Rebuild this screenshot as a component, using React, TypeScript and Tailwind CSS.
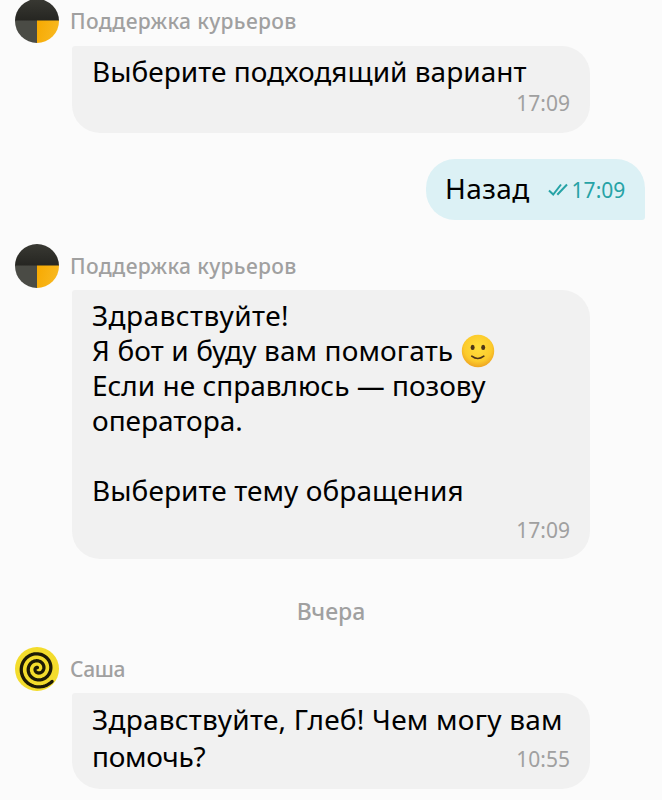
import type { ReactNode } from "react";

function CourierAvatar() {
  return (
    <svg viewBox="0 0 44 44" className="size-11 shrink-0">
      <defs>
        <clipPath id="round">
          <circle cx="22" cy="22" r="22" />
        </clipPath>
        <linearGradient id="amber" x1="0" y1="0" x2="1" y2="0.3">
          <stop offset="0" stopColor="#f7a900" />
          <stop offset="1" stopColor="#f8b820" />
        </linearGradient>
        <linearGradient id="dark" x1="0" y1="0" x2="0" y2="1">
          <stop offset="0" stopColor="#393933" />
          <stop offset="1" stopColor="#252521" />
        </linearGradient>
      </defs>
      <g clipPath="url(#round)">
        <rect width="44" height="22" fill="url(#dark)" />
        <rect y="21.5" width="22" height="23" fill="#4a4b45" />
        <rect x="22" y="21.5" width="22" height="23" fill="url(#amber)" />
      </g>
    </svg>
  );
}

function spiralPath() {
  const points: string[] = [];
  const start = 42;
  for (let a = 0; a <= 930; a += 6) {
    const r = 19.2 - (a / 360) * 7;
    const t = ((start + a) * Math.PI) / 180;
    const x = 22.8 + r * Math.cos(t);
    const y = 21.6 + r * Math.sin(t);
    points.push(`${x.toFixed(2)} ${y.toFixed(2)}`);
  }
  return "M" + points.join("L");
}

function SpiralAvatar() {
  return (
    <svg viewBox="0 0 44 44" className="size-11 shrink-0">
      <circle cx="22" cy="22" r="22" fill="#f3dc2c" />
      <path d={spiralPath()} fill="none" stroke="#1d1a06" strokeWidth="3.3" strokeLinecap="round" strokeLinejoin="round" />
    </svg>
  );
}

function Smile() {
  return (
    <svg viewBox="0 0 34 34" className="inline-block size-[34px] shrink-0">
      <defs>
        <radialGradient id="face" cx="0.5" cy="0.4" r="0.6">
          <stop offset="0" stopColor="#ffdf3c" />
          <stop offset="0.7" stopColor="#fccb2c" />
          <stop offset="1" stopColor="#eea522" />
        </radialGradient>
      </defs>
      <circle cx="17" cy="17" r="16.2" fill="url(#face)" />
      <ellipse cx="11.6" cy="13.4" rx="2" ry="2.6" fill="#4d3518" />
      <ellipse cx="22.2" cy="13.4" rx="2" ry="2.6" fill="#4d3518" />
      <path d="M10.8 22.2q6 4.6 12 0" fill="none" stroke="#4d3518" strokeWidth="1.7" strokeLinecap="round" />
    </svg>
  );
}

function Header({ avatar, name, className }: { avatar: ReactNode; name: string; className: string }) {
  return (
    <div className="flex h-11 items-center pl-[15px]">
      {avatar}
      <span className={`ml-[11px] whitespace-nowrap text-[21px] leading-7 font-medium text-[#a0a0a0] ${className}`}>{name}</span>
    </div>
  );
}

function Time({ value, className = "" }: { value: string; className?: string }) {
  return <span className={`mr-5 self-end text-[21px] leading-7 text-[#a0a0a0] ${className}`}>{value}</span>;
}

function Line({ className = "", children }: { className?: string; children?: ReactNode }) {
  return <div className={`flex h-[35px] items-center whitespace-nowrap text-[28px] leading-[35px] ${className}`}>{children}</div>;
}

function Bubble({ className, children }: { className: string; children: ReactNode }) {
  return (
    <div className={`ml-[72px] flex w-[518px] flex-col rounded-[28px] rounded-tl-[3px] bg-[#f1f1f1] pl-5 ${className}`}>
      {children}
    </div>
  );
}

export default function App() {
  return (
    <div className="flex h-[800px] w-[662px] flex-col overflow-hidden bg-[#fbfbfb] font-['Noto_Sans',sans-serif] text-black">
      <div className="-mt-px">
        <Header avatar={<CourierAvatar />} name="Поддержка курьеров" className="tracking-[0.33px]" />
      </div>
      <Bubble className="mt-[3px] h-[87px] pt-2">
        <Line className="tracking-[0.03px]">Выберите подходящий вариант</Line>
        <Time value="17:09" />
      </Bubble>

      <div className="mt-[26px] mr-[17px] flex h-[61px] w-[219px] items-center self-end rounded-[29px] rounded-br-[3px] bg-[#dcf1f5] pl-[19px]">
        <span className="mb-[3px] text-[28px] leading-[35px] tracking-[0.4px]">Назад</span>
        <svg viewBox="0 0 20 14" className="ml-[18px] h-[14px] w-5" fill="none" stroke="#26a3a6" strokeWidth="2">
          <path d="M1 7.5l4.2 4L13 1.5M9.3 11.8L19 1.5" />
        </svg>
        <span className="ml-1 text-[21px] leading-7 text-[#26a3a6]">17:09</span>
      </div>

      <div className="mt-6">
        <Header avatar={<CourierAvatar />} name="Поддержка курьеров" className="tracking-[0.33px]" />
      </div>
      <Bubble className="mt-[2px] h-[269px] pt-2">
        <Line className="tracking-[0.45px]">Здравствуйте!</Line>
        <Line>
          <span className="tracking-[0.12px]">Я бот и буду вам помогать</span>
          <span className="ml-2 flex">
            <Smile />
          </span>
        </Line>
        <Line>Если не справлюсь — позову</Line>
        <Line>оператора.</Line>
        <Line />
        <Line className="tracking-[0.08px]">Выберите тему обращения</Line>
        <Time value="17:09" className="mt-2" />
      </Bubble>

      <div className="mt-[34px] mb-px flex h-9 items-center justify-center text-[23px] font-medium leading-9 text-[#a0a0a0]">Вчера</div>

      <div className="mt-[17px]">
        <Header avatar={<SpiralAvatar />} name="Саша" className="tracking-[-0.3px]" />
      </div>
      <Bubble className="mt-[2px] h-[96px] pt-[9px]">
        <Line className="tracking-[0.24px]">Здравствуйте, Глеб! Чем могу вам</Line>
        <div className="mt-[2px] flex items-center justify-between">
          <Line className="tracking-[-0.3px]">помочь?</Line>
          <Time value="10:55" className="mb-px" />
        </div>
      </Bubble>
    </div>
  );
}
